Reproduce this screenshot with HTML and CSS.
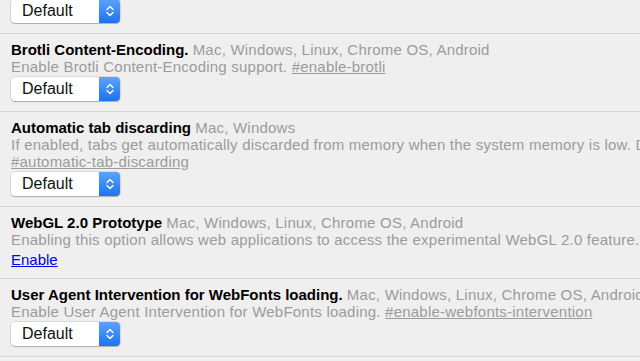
FILE: index.html
```html
<!DOCTYPE html>
<html>
<head>
<meta charset="utf-8">
<link rel="stylesheet" href="styles.css">
</head>
<body>
<div class="flags">
  <div class="row row-first">
    <div class="select"><span class="select-label">Default</span><span class="stepper"><svg width="10" height="14" viewBox="0 0 10 14"><path d="M2 5.5 L5 2.5 L8 5.5 M2 8.5 L5 11.5 L8 8.5" fill="none" stroke="#fff" stroke-width="1.4" stroke-linecap="round" stroke-linejoin="round"/></svg></span></div>
  </div>
  <div class="row">
    <div class="line"><span class="name">Brotli Content-Encoding.</span> <span class="muted">Mac, Windows, Linux, Chrome OS, Android</span></div>
    <div class="line muted">Enable Brotli Content-Encoding support. <a class="perm" href="#">#enable-brotli</a></div>
    <div class="select"><span class="select-label">Default</span><span class="stepper"><svg width="10" height="14" viewBox="0 0 10 14"><path d="M2 5.5 L5 2.5 L8 5.5 M2 8.5 L5 11.5 L8 8.5" fill="none" stroke="#fff" stroke-width="1.4" stroke-linecap="round" stroke-linejoin="round"/></svg></span></div>
  </div>
  <div class="row">
    <div class="line"><span class="name">Automatic tab discarding</span> <span class="muted">Mac, Windows</span></div>
    <div class="line muted">If enabled, tabs get automatically discarded from memory when the system memory is low. Discarded tabs are still visible on the tab strip and get reloaded when clicked on.</div>
    <div class="line muted"><a class="perm" href="#">#automatic-tab-discarding</a></div>
    <div class="select"><span class="select-label">Default</span><span class="stepper"><svg width="10" height="14" viewBox="0 0 10 14"><path d="M2 5.5 L5 2.5 L8 5.5 M2 8.5 L5 11.5 L8 8.5" fill="none" stroke="#fff" stroke-width="1.4" stroke-linecap="round" stroke-linejoin="round"/></svg></span></div>
  </div>
  <div class="row">
    <div class="line"><span class="name">WebGL 2.0 Prototype</span> <span class="muted">Mac, Windows, Linux, Chrome OS, Android</span></div>
    <div class="line muted">Enabling this option allows web applications to access the experimental WebGL 2.0 feature. The feature is still in development. <a class="perm" href="#">#enable-unsafe-es3-apis</a></div>
    <div class="line action"><a class="enable" href="#">Enable</a></div>
  </div>
  <div class="row">
    <div class="line"><span class="name">User Agent Intervention for WebFonts loading.</span> <span class="muted">Mac, Windows, Linux, Chrome OS, Android</span></div>
    <div class="line muted">Enable User Agent Intervention for WebFonts loading. <a class="perm" href="#">#enable-webfonts-intervention</a></div>
    <div class="select"><span class="select-label">Default</span><span class="stepper"><svg width="10" height="14" viewBox="0 0 10 14"><path d="M2 5.5 L5 2.5 L8 5.5 M2 8.5 L5 11.5 L8 8.5" fill="none" stroke="#fff" stroke-width="1.4" stroke-linecap="round" stroke-linejoin="round"/></svg></span></div>
  </div>
</div>
</body>
</html>
```
FILE: styles.css
```css
html, body {
  margin: 0;
  padding: 0;
  background: #efefef;
  overflow: hidden;
}
body {
  font-family: "Liberation Sans", Arial, sans-serif;
  font-size: 15px;
  line-height: 17px;
  color: #000;
}
.flags {
  display: flex;
  flex-direction: column;
}
.row {
  padding: 7px 11px 10px;
  border-bottom: 1px solid #d5d5d5;
  white-space: nowrap;
}
.row-first {
  padding-top: 0;
  margin-top: -3px;
}
.name {
  font-weight: bold;
}
.muted {
  color: #9b9b9b;
  letter-spacing: 0.22px;
}
.perm {
  color: #9b9b9b;
  text-decoration: underline;
}
.action {
  margin-top: 3px;
}
.enable {
  color: #0000ee;
  text-decoration: underline;
}
.select {
  margin-top: 2px;
  width: 109px;
  height: 24px;
  box-sizing: border-box;
  display: flex;
  align-items: stretch;
  background: #fff;
  border-radius: 4px;
  box-shadow: 0 0 0 0.5px rgba(0,0,0,0.18), 0 1px 1px rgba(0,0,0,0.2);
}
.select-label {
  flex: 1;
  padding-left: 11px;
  font-size: 16px;
  line-height: 24px;
  color: #111;
}
.stepper {
  width: 21px;
  border-radius: 0 4px 4px 0;
  background: linear-gradient(#5aa4fb, #1e72f3);
  display: flex;
  align-items: center;
  justify-content: center;
}
```
